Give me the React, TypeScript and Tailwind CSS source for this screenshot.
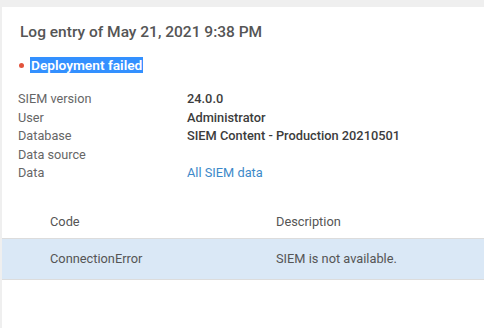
const info = [
  { label: 'SIEM version', value: '24.0.0' },
  { label: 'User', value: 'Administrator' },
  { label: 'Database', value: 'SIEM Content - Production 20210501' },
  { label: 'Data source', value: '' },
  { label: 'Data', value: 'All SIEM data', link: true },
]

export default function App() {
  return (
    <div className="h-[328px] w-[484px] overflow-hidden bg-[#efefef] pl-[2px] pt-[7px] font-['Roboto',sans-serif]">
      <div className="h-full bg-white pt-[16px]">
        <h1 className="pl-[18px] text-[15.5px] font-medium leading-[19px] text-[#555]">
          Log entry of May 21, 2021 9:38 PM
        </h1>

        <div className="mt-[15px] flex items-center pl-[17px]">
          <span className="h-[5px] w-[5px] rounded-full bg-[#e2533c]" />
          <span className="ml-[6px] bg-[#3390ff] px-[1px] text-[13.7px] font-semibold leading-[16px] text-white">
            Deployment failed
          </span>
        </div>

        {/* Details */}
        <div className="mt-[17px] pl-[16px] leading-[18.5px]">
          {info.map((row) => (
            <div key={row.label} className="flex">
              <div className="w-[169px] text-[12.7px] text-[#666]">{row.label}</div>
              <div
                className={
                  row.link
                    ? 'text-[12.8px] text-[#3d89c9]'
                    : 'text-[12.8px] font-medium text-[#3c3c3c]'
                }
              >
                {row.value}
              </div>
            </div>
          ))}
        </div>

        {/* Errors table */}
        <div className="mt-[14px] text-[12.8px] leading-[14px] text-[#555]">
          <div className="flex h-[41px] items-end pb-[9px]">
            <div className="w-[274px] pl-[48px]">Code</div>
            <div>Description</div>
          </div>
          <div className="flex h-[42px] items-center border-y border-[#dcdcdc] bg-[#dae8f6]">
            <div className="w-[274px] pl-[48px]">ConnectionError</div>
            <div>SIEM is not available.</div>
          </div>
        </div>
      </div>
    </div>
  )
}
